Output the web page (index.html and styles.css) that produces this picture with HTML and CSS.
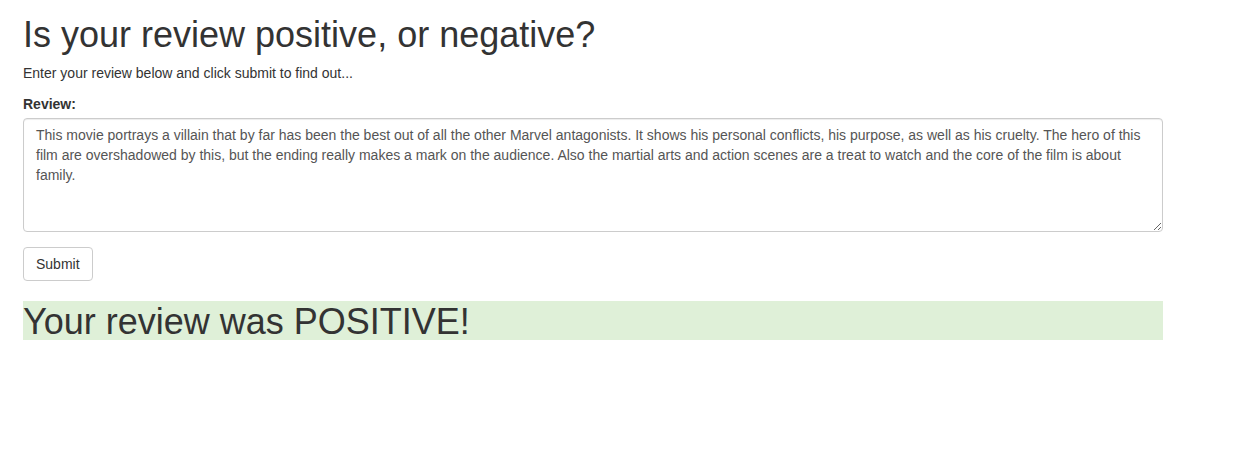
FILE: index.html
```html
<!DOCTYPE html>
<html lang="en">
<head>
<meta charset="utf-8">
<title>Review sentiment</title>
<link rel="stylesheet" href="styles.css">
</head>
<body>
<div class="container">
  <h1 class="title">Is your review positive, or negative?</h1>
  <p class="intro">Enter your review below and click submit to find out...</p>
  <form class="review-form">
    <div class="form-group">
      <label class="field-label" for="review">Review:</label>
      <textarea class="form-control" id="review" rows="5">This movie portrays a villain that by far has been the best out of all the other Marvel antagonists. It shows his personal conflicts, his purpose, as well as his cruelty. The hero of this film are overshadowed by this, but the ending really makes a mark on the audience. Also the martial arts and action scenes are a treat to watch and the core of the film is about family.</textarea>
    </div>
    <button type="button" class="btn">Submit</button>
  </form>
  <h1 class="result">Your review was POSITIVE!</h1>
</div>
</body>
</html>
```
FILE: styles.css
```css
* { box-sizing: border-box; }
html, body {
  margin: 0;
  padding: 0;
  background: #fff;
}
body {
  font-family: "Liberation Sans", Arial, Helvetica, sans-serif;
  font-size: 14px;
  line-height: 1.42857;
  color: #333;
}
.container {
  width: 1163px;
  padding-left: 23px;
}
.title {
  font-size: 36px;
  font-weight: 500;
  line-height: 1.1;
  margin: 15px 0 9px;
}
.intro {
  margin: 0 0 10px;
}
.review-form { margin: 0; }
.form-group { margin-bottom: 15px; }
.field-label {
  display: inline-block;
  font-weight: bold;
  padding-top: 1px;
  margin-bottom: 3px;
}
.form-control {
  display: block;
  width: 100%;
  height: 114px;
  padding: 7px 12px 5px;
  font-family: inherit;
  font-size: 14px;
  line-height: 1.42857;
  color: #555;
  background: #fff;
  border: 1px solid #ccc;
  border-radius: 4px;
  box-shadow: inset 0 1px 1px rgba(0,0,0,.075);
  resize: vertical;
  margin: 0;
}
.btn {
  display: inline-block;
  padding: 7px 12px 5px;
  font-family: inherit;
  font-size: 14px;
  line-height: 1.42857;
  color: #333;
  background: #fff;
  border: 1px solid #ccc;
  border-radius: 4px;
  margin: 0;
  cursor: pointer;
}
.result {
  font-size: 36px;
  font-weight: 500;
  line-height: 1.1;
  padding-top: 1px;
  height: 39.6px;
  margin: 20px 0 10px;
  background: #dff0d8;
}
```
